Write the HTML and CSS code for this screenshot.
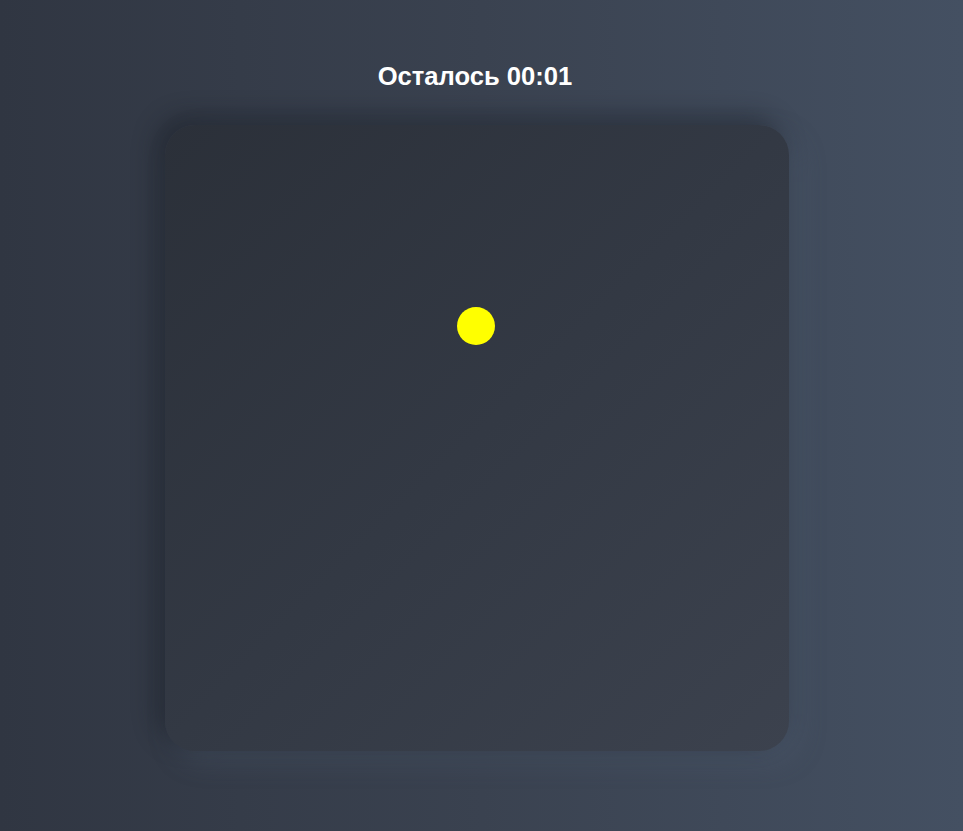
FILE: index.html
```html
<!DOCTYPE html>
<html lang="ru">
<head>
<meta charset="utf-8">
<title>Игра</title>
<link rel="stylesheet" href="styles.css">
</head>
<body>
<main class="page">
  <h1 class="timer">Осталось 00:01</h1>
  <div class="field">
    <div class="target"></div>
  </div>
</main>
</body>
</html>
```
FILE: styles.css
```css
html, body {
  margin: 0;
  height: 100%;
}
body {
  background: linear-gradient(90deg, #303642 0%, #3a4250 50%, #445062 100%);
  font-family: "Liberation Sans", Arial, sans-serif;
  overflow: hidden;
}
.page {
  display: flex;
  flex-direction: column;
  align-items: center;
  padding-top: 61px;
  padding-right: 9px;
}
.timer {
  margin: 0;
  color: #ffffff;
  font-size: 25.6px;
  font-weight: 700;
  line-height: 30px;
  transform: translateX(-2px);
}
.field {
  position: relative;
  margin-top: 34px;
  width: 624px;
  height: 626px;
  border-radius: 30px;
  background: linear-gradient(135deg, #2b3039 0%, #333944 50%, #3c424e 100%);
  box-shadow: -8px -8px 24px rgba(20, 24, 30, 0.45), 10px 10px 26px rgba(80, 95, 115, 0.35);
}
.target {
  position: absolute;
  left: 292px;
  top: 182px;
  width: 38px;
  height: 38px;
  border-radius: 50%;
  background: #ffff00;
}
```
